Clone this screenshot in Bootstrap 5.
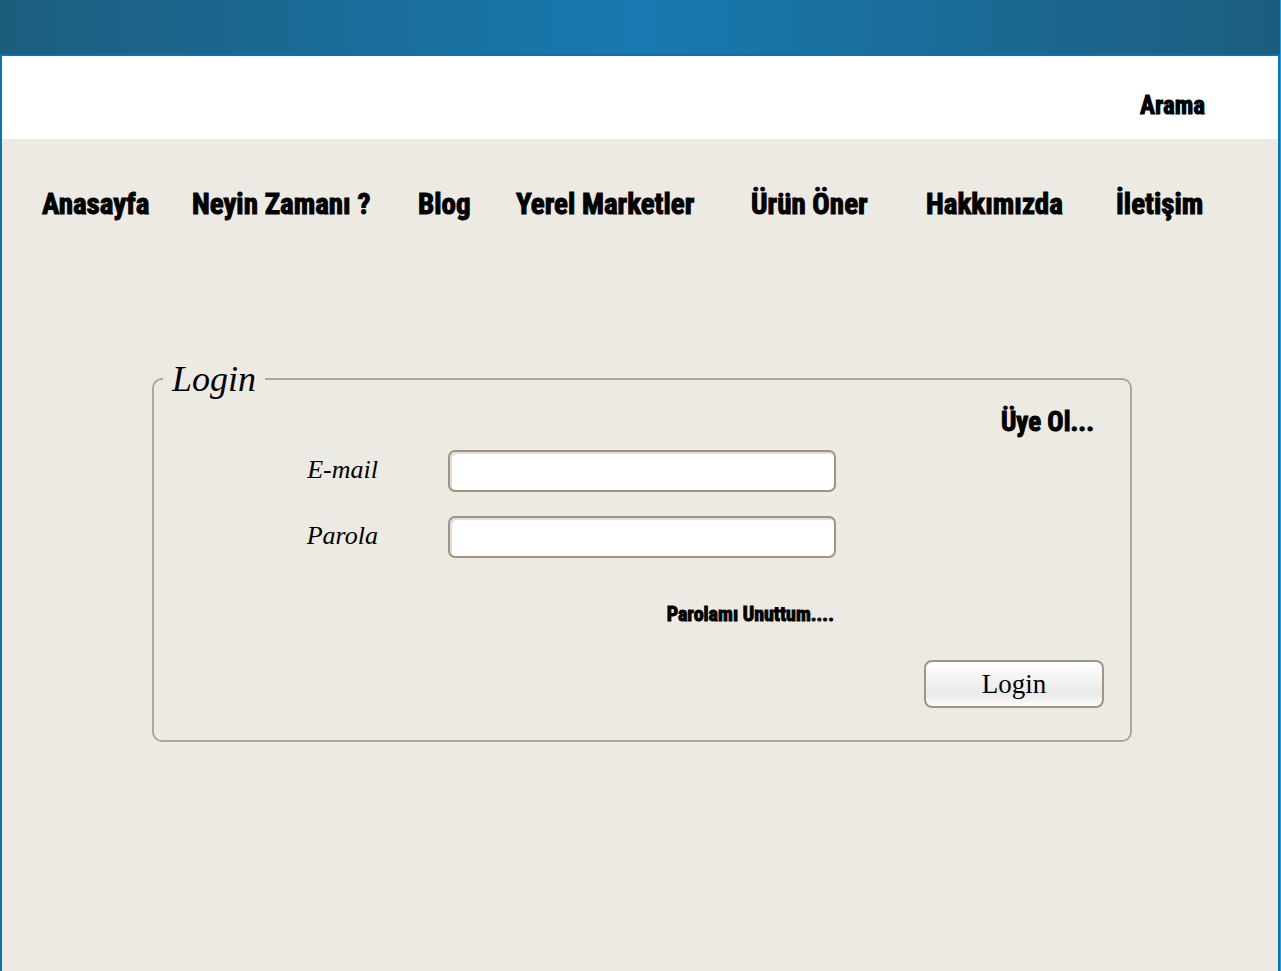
<!DOCTYPE html>
<html lang="tr">
<head>
<meta charset="utf-8">
<meta name="viewport" content="width=device-width, initial-scale=1">
<title>Login</title>
<link rel="stylesheet" href="https://cdn.jsdelivr.net/npm/bootstrap@5.3.0/dist/css/bootstrap.min.css">
<style>
  body { background: #edeae3; color: #000; font-family: "Liberation Sans", sans-serif; }
  .shell { border-right: 1px solid #2a9fe0; }
  .top-band { height: 54px; background: linear-gradient(to right, #1c5d7d, #1879b0 50%, #1c5d7d); }
  .frame { border: 2px solid #0d72ab; border-bottom: 0; }
  .search-bar { height: 83px; padding: 0 73px 0 40px; background: #fff; }
  .heavy { font-family: Impact, "Roboto Condensed", "Liberation Sans", sans-serif; font-weight: 700; color: #000; text-decoration: none; white-space: nowrap; line-height: 36px; -webkit-text-stroke: 1px #000; }
  .size-m { font-size: 25px; }
  .size-l { font-size: 29px; }
  .size-j { font-size: 27px; }
  .size-s { font-size: 20px; line-height: 24px; }
  .main-nav { display: grid; grid-template-columns: 150fr 226fr 98fr 235fr 175fr 190fr 162fr; padding: 47px 0 0 40px; }
  .login-wrap { padding: 138px 146px 0 150px; }
  .login-box { border: 2px solid #aca899; border-radius: 10px; padding: 0 26px 32px; }
  .script { font-family: "Apple Chancery", "Liberation Serif", serif; font-style: italic; }
  .login-box legend { float: none; width: auto; margin: 0 0 0 -17px; padding: 0 9px; font-size: 36px; line-height: 38px; }
  .field-label { width: 198px; font-size: 26px; line-height: 40px; text-align: right; }
  .field-row { gap: 70px; }
  .field { width: 388px; height: 42px; border: 2px solid #a09482; border-radius: 7px; box-shadow: inset 2px 2px 1px #ddd; }
  .fields { gap: 24px; margin-top: 10px; }
  .forgot { width: 654px; margin-top: 44px; }
  .join { padding: 6px 10px 0 0; }
  .send { width: 180px; height: 48px; margin-top: 34px; padding: 0; border: 2px solid #a09482; border-radius: 8px; background: linear-gradient(#fff, #e9e9e9 72%, #fbfbfb); color: #000; font: 27px/42px "American Typewriter", "Liberation Serif", serif; }
</style>
</head>
<body>
<div class="shell min-vh-100 d-flex flex-column">
  <div class="top-band"></div>
  <div class="frame flex-grow-1">
    <header class="search-bar d-flex justify-content-end align-items-center">
      <a class="heavy size-m mt-3" href="#">Arama</a>
    </header>
    <nav class="main-nav">
      <a class="heavy size-l" href="#">Anasayfa</a>
      <a class="heavy size-l" href="#">Neyin Zamanı ?</a>
      <a class="heavy size-l" href="#">Blog</a>
      <a class="heavy size-l" href="#">Yerel Marketler</a>
      <a class="heavy size-l" href="#">Ürün Öner</a>
      <a class="heavy size-l" href="#">Hakkımızda</a>
      <a class="heavy size-l" href="#">İletişim</a>
    </nav>
    <main class="login-wrap">
      <form>
        <fieldset class="login-box">
          <legend class="script">Login</legend>
          <div class="join d-flex justify-content-end"><a class="heavy size-j" href="#">Üye Ol...</a></div>
          <div class="fields d-flex flex-column">
            <div class="field-row d-flex">
              <label class="script field-label" for="email">E-mail</label>
              <input class="field" type="email" id="email">
            </div>
            <div class="field-row d-flex">
              <label class="script field-label" for="parola">Parola</label>
              <input class="field" type="password" id="parola">
            </div>
          </div>
          <div class="forgot d-flex justify-content-end"><a class="heavy size-s" href="#">Parolamı Unuttum....</a></div>
          <div class="d-flex justify-content-end"><button class="send" type="submit">Login</button></div>
        </fieldset>
      </form>
    </main>
  </div>
</div>
<script src="https://cdn.jsdelivr.net/npm/bootstrap@5.3.0/dist/js/bootstrap.bundle.min.js"></script>
</body>
</html>
